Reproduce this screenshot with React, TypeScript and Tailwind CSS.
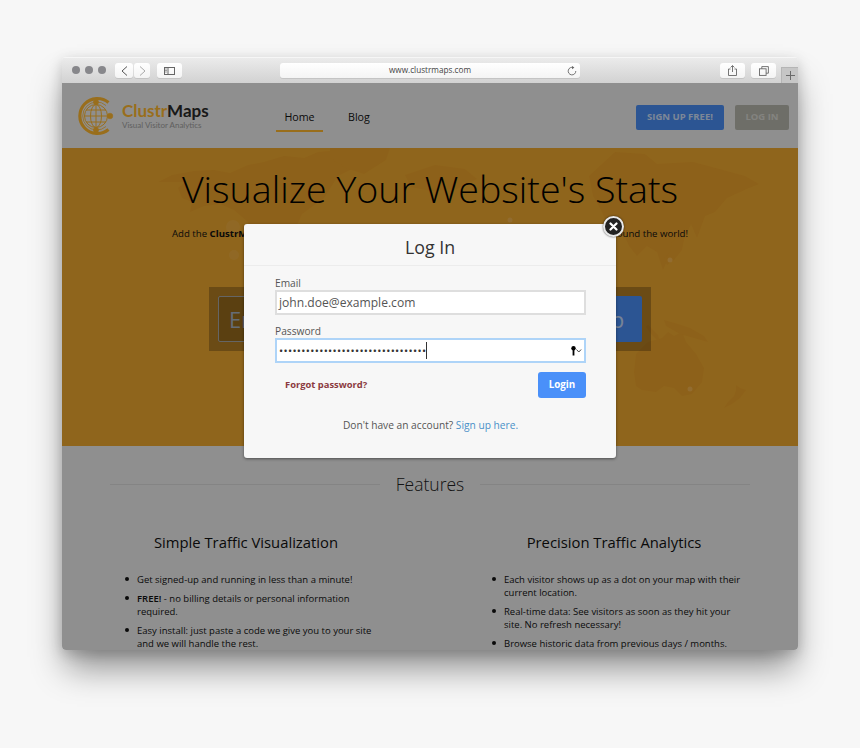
import React from 'react';

/** 점 개수만큼 비밀번호 표시 */
const PASSWORD_DOTS = '•'.repeat(33);

const leftFeatures: React.ReactNode[] = [
  'Get signed-up and running in less than a minute!',
  <><b className="font-semibold">FREE!</b> - no billing details or personal information required.</>,
  'Easy install: just paste a code we give you to your site and we will handle the rest.',
];

const rightFeatures: React.ReactNode[] = [
  'Each visitor shows up as a dot on your map with their current location.',
  'Real-time data: See visitors as soon as they hit your site. No refresh necessary!',
  'Browse historic data from previous days / months.',
];

const ToolButton: React.FC<{ className?: string; children: React.ReactNode }> = ({ className = '', children }) => (
  <div className={`flex h-[15px] items-center justify-center rounded-[3px] bg-gradient-to-b from-white to-[#f4f4f4] shadow-[0_1px_0_#c4c4c4] ${className}`}>
    {children}
  </div>
);

const FeatureItem: React.FC<{ children: React.ReactNode }> = ({ children }) => (
  <li className="flex">
    <span className="mr-[8px] mt-[4px] h-[4px] w-[4px] shrink-0 rounded-full bg-[#111]" />
    <span>{children}</span>
  </li>
);

const Logo = () => (
  <svg width="38" height="40" viewBox="0 0 38 40" fill="none" stroke="#ffb830" className="shrink-0">
    <path d="M31.5 6.5 A17.5 17.5 0 1 0 31.5 33.5" strokeWidth="3.2" />
    <path d="M29 9.5 A14 14 0 1 0 29 30.5" strokeWidth="0.8" />
    <circle cx="19" cy="20" r="11.5" strokeWidth="1" />
    <ellipse cx="19" cy="20" rx="5.5" ry="11.5" strokeWidth="1" />
    <path d="M19 8.5V31.5M7.5 20H30.5M9 14H29M9 26H29" strokeWidth="1" />
    <circle cx="19" cy="6" r="2.6" fill="#ffb830" strokeWidth="0.6" />
    <circle cx="19" cy="34" r="2.6" fill="#ffb830" strokeWidth="0.6" />
    <circle cx="33" cy="20" r="2.8" fill="#ffb830" strokeWidth="0.6" />
  </svg>
);

/** 히어로 배경 세계지도 (페이지 좌표 기준) */
const WorldMap = () => (
  <svg viewBox="62 148 736 298" className="absolute inset-0 h-full w-full" fill="#eca22c">
    <path d="M158 182l14-7 22-4 20-1 16 3 18-8 16-3 20-6 20 2 14-6 24-2 20 4-8 14-16 8-14 22-22 16-8 18-20 8-10 16-8-12-8-22-14-12-14-6-16 2-14 6 2-10-10-4-4-10 8-6z" />
    <path d="M330 148h60l-4 12-22 14-18-6-16-10z" />
    <path d="M405 175l30-10 30 4 12 10-20 10-26 2-20-4z" />
    <path d="M615 152l30 2 12 10 36-2 30 8 22 6 14 8-10 4-22 10-12 14-10 4-8 22-6-14-6 14-14 14-8 18-6-18-10-6-10 10-8-10-6-14-14-4-8-18-8-14-4-20z" />
    <path d="M672 242l8-6 4 4-2 10-8 10-7 5-3-6 6-7z" />
    <path d="M636 354l12-12 14-4 6-6 6 4 8-4 4 10 10 12 8 14-2 14-10 12-10 2-8-8-10-2-8 6-14-2-6-4-2-14z" />
    <path d="M736 385l4 3 6 2-6 8-8 6-8 4 4-6 6-6 2-6z" />
    <path d="M664 320l14 4 12 4 14 8 4 6-14-4-14-4-14-8z" />
    <path d="M648 325l10 10 2 8-8-8-6-8z" />
    <circle cx="670" cy="260" r="2.5" fill="#f3b450" />
    <circle cx="690" cy="389" r="2.5" fill="#f3b450" />
    <circle cx="233" cy="227" r="7" fill="#f3b450" fillOpacity="0.5" />
    <circle cx="234" cy="255" r="5" fill="#f3b450" fillOpacity="0.5" />
    <circle cx="510" cy="220" r="2.5" fill="#f3b450" />
  </svg>
);

const App: React.FC = () => {
  return (
    <div className="h-[748px] w-[860px] overflow-hidden bg-[#f7f7f7] pl-[62px] pt-[57px] [font-family:'Open_Sans',sans-serif] text-black">
      <div className="flex h-[593px] w-[736px] flex-col overflow-hidden rounded-[4px] shadow-[0_22px_32px_-4px_rgba(0,0,0,0.42),0_4px_14px_rgba(0,0,0,0.18)]">
        {/* 사파리 툴바 */}
        <div className="relative flex h-[26px] shrink-0 items-start bg-gradient-to-b from-[#ececec] to-[#d2d2d2] pt-[6px] shadow-[inset_0_1px_0_#f6f6f6]">
          <div className="ml-[10px] mt-[3px] flex gap-[5px]">
            <span className="h-[8px] w-[8px] rounded-full bg-[#87878b]" />
            <span className="h-[8px] w-[8px] rounded-full bg-[#87878b]" />
            <span className="h-[8px] w-[8px] rounded-full bg-[#87878b]" />
          </div>
          <div className="ml-[9px] flex gap-px">
            <ToolButton className="w-[18px]">
              <svg width="7" height="10" viewBox="0 0 7 10" fill="none" stroke="#555" strokeWidth="1"><path d="M6 0.5L1 5l5 4.5" /></svg>
            </ToolButton>
            <ToolButton className="w-[16px]">
              <svg width="7" height="10" viewBox="0 0 7 10" fill="none" stroke="#aaa" strokeWidth="1"><path d="M1 0.5L6 5l-5 4.5" /></svg>
            </ToolButton>
          </div>
          <ToolButton className="ml-[7px] w-[25px]">
            <svg width="11" height="8" viewBox="0 0 11 8" fill="none" stroke="#666" strokeWidth="1"><rect x="0.5" y="0.5" width="10" height="7" /><path d="M4 0.5v7" /><path d="M1 2h2M1 3.5h2M1 5h2" strokeWidth="0.6" /></svg>
          </ToolButton>
          <ToolButton className="relative ml-[98px] w-[300px]">
            <span className="text-[8.2px] leading-none text-[#444]">www.clustrmaps.com</span>
            <svg width="10" height="10" viewBox="0 0 10 10" fill="none" stroke="#666" strokeWidth="0.9" className="absolute right-[3px] top-[3px]"><path d="M6.5 1.6A3.8 3.8 0 1 0 8.8 5" /><path d="M5 0l2.4 1.6L5 3.2z" fill="#666" stroke="none" /></svg>
          </ToolButton>
          <ToolButton className="ml-[140px] w-[25px]">
            <svg width="9" height="11" viewBox="0 0 9 11" fill="none" stroke="#666" strokeWidth="0.9"><path d="M2.5 4H0.5V10.5H8.5V4H6.5" /><path d="M4.5 7V0.7M2.6 2.4L4.5 0.6L6.4 2.4" /></svg>
          </ToolButton>
          <ToolButton className="ml-[6px] w-[25px]">
            <svg width="10" height="10" viewBox="0 0 10 10" fill="none" stroke="#666" strokeWidth="0.9"><rect x="0.5" y="2.8" width="6.6" height="6.6" /><path d="M2.8 2.8V0.6H9.4V7.2H7.1" /></svg>
          </ToolButton>
          <div className="absolute bottom-0 right-0 flex h-[16px] w-[17px] items-center justify-center border-l border-t border-[#b5b5b5] bg-[#c6c6c6]">
            <svg width="9" height="9" viewBox="0 0 9 9" stroke="#6a6a6a" strokeWidth="1"><path d="M4.5 0v9M0 4.5h9" /></svg>
          </div>
        </div>

        {/* 페이지 영역 */}
        <div className="relative min-h-0 flex-1 overflow-hidden bg-[#efefef]">
          <header className="flex h-[65px] items-center pl-[15px] pr-[9px]">
            <Logo />
            <div className="ml-[7px] w-[154px] [font-family:Lato,sans-serif]">
              <div className="text-[17px] font-bold leading-[19px]"><span className="text-[#ffb830]">Clustr</span><span className="text-[#2a2a2a]">Maps</span></div>
              <div className="text-[8px] leading-[10px] text-[#a0a0a0]">Visual Visitor Analytics</div>
            </div>
            <nav className="flex h-full items-end text-[10.7px] text-[#111]">
              <a className="mb-[16px] block w-[47px] border-b-2 border-[#ffb830] pb-[5px] text-center leading-[16px]">Home</a>
              <a className="mb-[23px] ml-[25px] block leading-[16px]">Blog</a>
            </nav>
            <div className="ml-auto mt-[4px] flex gap-[11px] text-[9.5px] font-bold">
              <button className="h-[25px] w-[88px] rounded-[2px] bg-[#4a8ef5] text-white/75">SIGN UP FREE!</button>
              <button className="h-[25px] w-[54px] rounded-[2px] bg-[#b8b8ad] text-white/50">LOG IN</button>
            </div>
          </header>

          <section className="relative flex h-[298px] flex-col items-center overflow-hidden bg-[#efa92f] pt-[17px]">
            <WorldMap />
            <h1 className="relative text-[37.6px] font-light leading-[48px] text-black">Visualize Your Website's Stats</h1>
            <p className="relative mt-[13px] whitespace-nowrap text-[9.63px] leading-[16px] text-[#111]">
              Add the <b className="font-bold">ClustrMaps</b> widget to your website and see all of your live visitors as they arrive from all around the world!
            </p>
            <form className="relative mt-[45px] flex h-[64px] w-[442px] bg-black/25 p-[9px]">
              <div className="flex h-[46px] flex-1 items-center rounded-[2px] border border-[#a8a8a8] bg-black/15 pl-[10px] text-[22px] text-[#a9b4c4]">Enter your email</div>
              <div className="flex h-[46px] w-[114px] items-center justify-center rounded-r-[2px] bg-[#4a8ef5] text-[22px] text-white/70">Sign Up</div>
            </form>
          </section>

          <section>
            <div className="mx-[48px] mt-[26px] flex items-center gap-[16px]">
              <span className="h-px flex-1 bg-[#dcdcdc]" />
              <h2 className="text-[17.5px] font-light leading-[24px] text-[#222]">Features</h2>
              <span className="h-px flex-1 bg-[#dcdcdc]" />
            </div>
            <div className="mt-[36px] grid grid-cols-2">
              <div>
                <h3 className="text-center text-[14.8px] leading-[20px] text-[#111]">Simple Traffic Visualization</h3>
                <ul className="mt-[21px] flex flex-col gap-[6px] pl-[63px] pr-[50px] text-[9.5px] leading-[13px] text-[#111]">
                  {leftFeatures.map((item, index) => <FeatureItem key={index}>{item}</FeatureItem>)}
                </ul>
              </div>
              <div>
                <h3 className="text-center text-[14.8px] leading-[20px] text-[#111]">Precision Traffic Analytics</h3>
                <ul className="mt-[21px] flex flex-col gap-[6px] pl-[62px] pr-[50px] text-[9.5px] leading-[13px] text-[#111]">
                  {rightFeatures.map((item, index) => <FeatureItem key={index}>{item}</FeatureItem>)}
                </ul>
              </div>
            </div>
          </section>

          {/* 모달 뒤 어두운 오버레이 */}
          <div className="absolute inset-0 bg-black/40" />

          {/* 로그인 모달 */}
          <div className="absolute left-[182px] top-[141px] flex h-[234px] w-[372px] flex-col rounded-[3px] bg-[#f7f7f7] shadow-[0_1px_3px_rgba(0,0,0,0.45)]">
            <h2 className="h-[42px] border-b border-[#ececec] pt-[10px] text-center text-[17.8px] leading-[26px] text-[#333]">Log In</h2>
            <div className="px-[31px] pr-[30px] pt-[10px] text-[10.2px] text-[#555]">
              <label className="block leading-[14px]">Email</label>
              <div className="flex h-[25px] items-center border-2 border-[#dedede] bg-white pl-[2px] pt-[2px] text-[12.1px] text-[#555]">john.doe@example.com</div>
              <label className="mt-[9px] block leading-[14px]">Password</label>
              <div className="flex h-[25px] items-center border-2 border-[#aed4f8] bg-white pl-[2px]">
                <span className="text-[11px] leading-none tracking-[0.33px] text-[#333]">{PASSWORD_DOTS}</span>
                <span className="h-[17px] w-px bg-[#333]" />
                <svg width="14" height="10" viewBox="0 0 14 10" className="ml-auto mr-[1px]" fill="none">
                  <circle cx="4.5" cy="2.2" r="2.2" fill="#000" />
                  <path d="M4.5 3v6.5" stroke="#000" strokeWidth="1.8" />
                  <path d="M7.5 3.5L9.8 6l2.3-2.5" stroke="#444" strokeWidth="1" />
                </svg>
              </div>
              <div className="mt-[9px] flex items-center justify-between">
                <a className="ml-[10px] pt-[1px] text-[9.4px] font-bold text-[#8b3a40]">Forgot password?</a>
                <button className="h-[26px] w-[48px] rounded-[3px] bg-[#4a90f9] text-[9.8px] font-bold text-white">Login</button>
              </div>
              <p className="mt-[19px] text-center leading-[16px] text-[#555]">
                Don't have an account? <a className="text-[#4a90c8]">Sign up here.</a>
              </p>
            </div>
            <button className="absolute right-[-8px] top-[-8px] flex h-[21px] w-[21px] items-center justify-center rounded-full border-2 border-[#e8e8e8] bg-[#222] shadow-[0_0_2px_rgba(0,0,0,0.7)]">
              <svg width="9" height="9" viewBox="0 0 9 9" stroke="#fff" strokeWidth="2.2" strokeLinecap="round"><path d="M1.5 1.5l6 6M7.5 1.5l-6 6" /></svg>
            </button>
          </div>
        </div>
      </div>
    </div>
  );
};

export default App;
